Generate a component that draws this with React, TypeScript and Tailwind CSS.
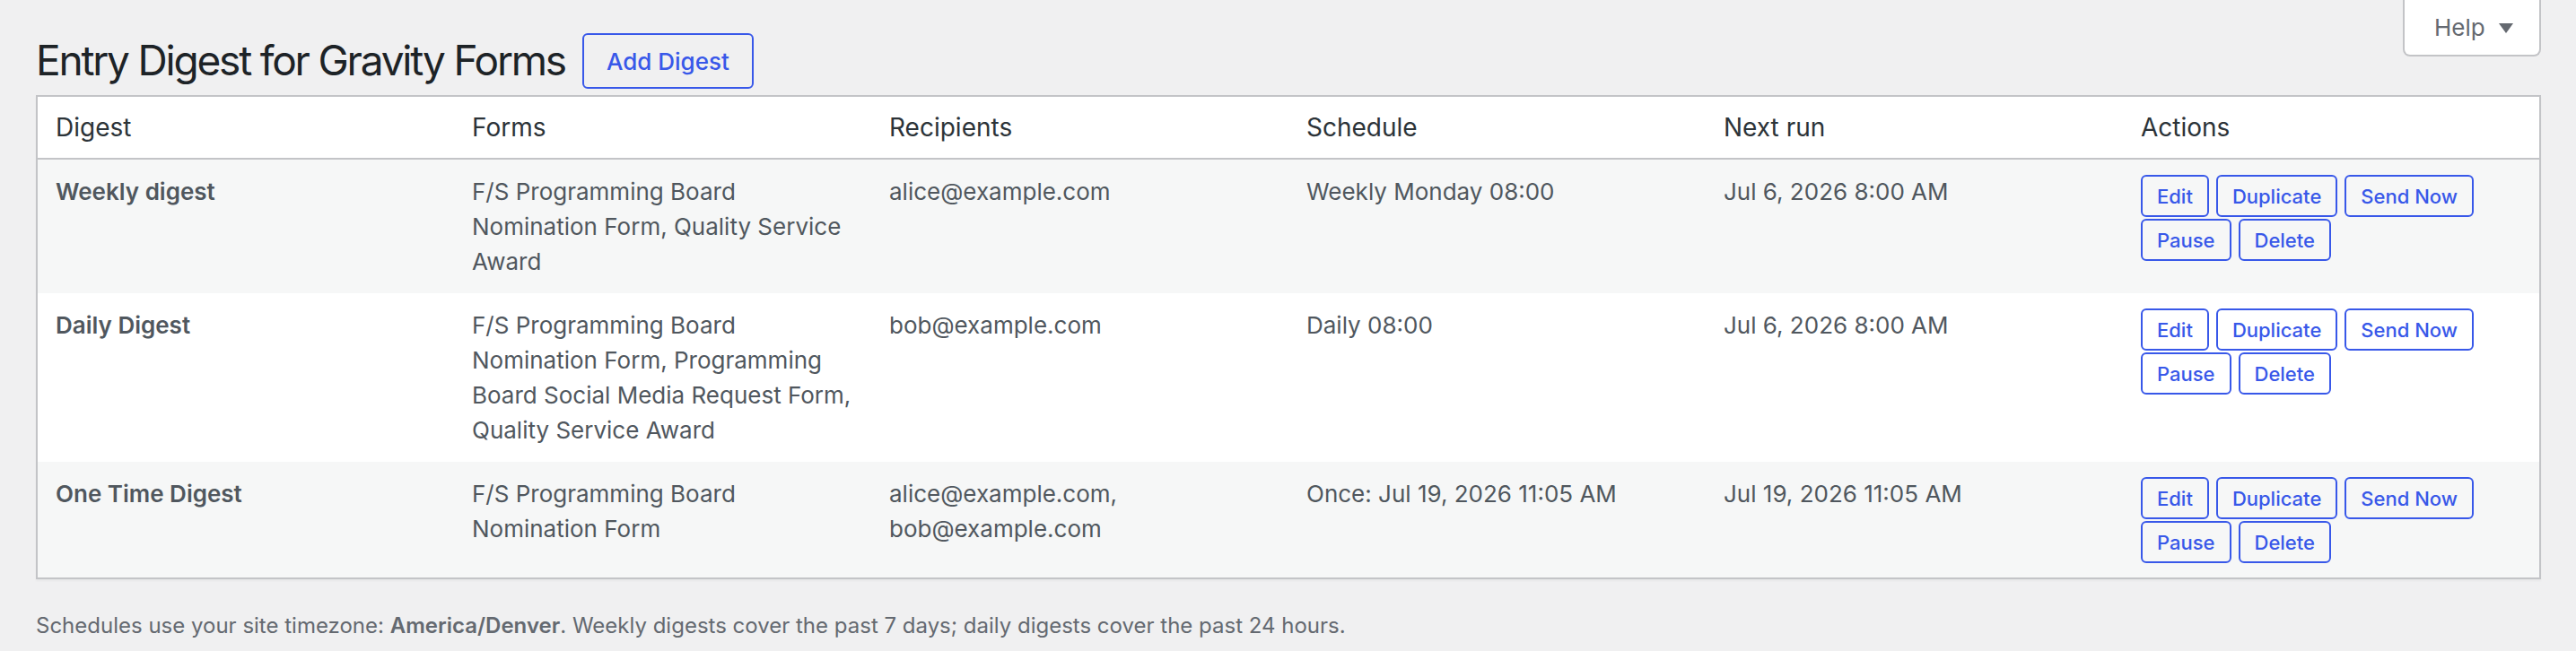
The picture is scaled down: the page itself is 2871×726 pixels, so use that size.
const rows = [
  {
    name: "Weekly digest",
    forms: "F/S Programming Board Nomination Form, Quality Service Award",
    recipients: ["alice@example.com"],
    schedule: "Weekly Monday 08:00",
    next: "Jul 6, 2026 8:00 AM",
  },
  {
    name: "Daily Digest",
    forms:
      "F/S Programming Board Nomination Form, Programming Board Social Media Request Form, Quality Service Award",
    recipients: ["bob@example.com"],
    schedule: "Daily 08:00",
    next: "Jul 6, 2026 8:00 AM",
  },
  {
    name: "One Time Digest",
    forms: "F/S Programming Board Nomination Form",
    recipients: ["alice@example.com,", "bob@example.com"],
    schedule: "Once: Jul 19, 2026 11:05 AM",
    next: "Jul 19, 2026 11:05 AM",
  },
];

const headers = ["Digest", "Forms", "Recipients", "Schedule", "Next run", "Actions"];
const actions = ["Edit", "Duplicate", "Send Now", "Pause", "Delete"];

function SmallButton({ label }: { label: string }) {
  return (
    <button
      type="button"
      className="h-[47px] px-[16px] border-2 border-[#3858e9] rounded-[6px] bg-transparent text-[22px] font-medium leading-none text-[#3858e9]"
    >
      {label}
    </button>
  );
}

export default function App() {
  return (
    <div className="min-h-screen bg-[#f0f0f1] font-['Inter',sans-serif] text-[#3c434a]">
      {/* header: title + help tab */}
      <div className="flex items-start justify-between pl-[40px] pr-[39px]">
        <div className="flex items-center gap-[19px] pt-[37px]">
          <h1 className="text-[46px] font-normal leading-[1.3] text-[#1d2327] tracking-[-2.2px]">
            Entry Digest for Gravity Forms
          </h1>
          <button
            type="button"
            className="h-[62px] px-[25px] border-2 border-[#3858e9] rounded-[6px] text-[26px] font-medium text-[#3858e9]"
          >
            Add Digest
          </button>
        </div>
        <button
          type="button"
          className="flex h-[63px] w-[154px] items-center gap-[15px] pl-[33px] bg-white border-2 border-t-0 border-[#c3c4c7] rounded-b-[8px] text-[26px] text-[#646970]"
        >
          Help
          <svg width="16" height="11" viewBox="0 0 16 11" className="mt-[2px]">
            <path d="M0 0h16L8 11z" fill="#646970" />
          </svg>
        </button>
      </div>

      {/* digest table */}
      <div className="mt-[7px] pl-[40px] pr-[39px]">
        <table className="w-full table-fixed border-2 border-[#c3c4c7] bg-white shadow-[0_2px_2px_rgba(0,0,0,0.04)]">
          <thead>
            <tr>
              {headers.map((h) => (
                <th
                  key={h}
                  className="px-[20px] py-[16px] text-left text-[28px] font-normal leading-[1.3] text-[#2c3338] border-b-2 border-[#c3c4c7]"
                >
                  {h}
                </th>
              ))}
            </tr>
          </thead>
          <tbody>
            {rows.map((r, i) => (
              <tr key={r.name} className={i % 2 === 0 ? "bg-[#f6f7f7]" : "bg-white"}>
                <td className="px-[20px] py-[16px] align-top text-[26px] leading-[39px] font-semibold text-[#50575e]">
                  {r.name}
                </td>
                <td className="px-[20px] py-[16px] align-top text-[26px] leading-[39px] text-[#50575e]">
                  {r.forms}
                </td>
                <td className="px-[20px] py-[16px] align-top text-[26px] leading-[39px] text-[#50575e]">
                  {r.recipients.map((e) => (
                    <div key={e}>{e}</div>
                  ))}
                </td>
                <td className="px-[20px] py-[16px] align-top text-[26px] leading-[39px] text-[#50575e]">
                  {r.schedule}
                </td>
                <td className="px-[20px] py-[16px] align-top text-[26px] leading-[39px] text-[#50575e]">
                  {r.next}
                </td>
                <td className="px-[20px] pt-[17px] pb-[16px] align-top">
                  <div className="flex flex-wrap gap-x-[8px] gap-y-[2px]">
                    {actions.map((a) => (
                      <SmallButton key={a} label={a} />
                    ))}
                  </div>
                </td>
              </tr>
            ))}
          </tbody>
        </table>
      </div>

      <p className="mt-[34px] pl-[40px] text-[24px] leading-[36px] text-[#646970]">
        Schedules use your site timezone: <strong className="font-semibold">America/Denver</strong>. Weekly
        digests cover the past 7 days; daily digests cover the past 24 hours.
      </p>
    </div>
  );
}
